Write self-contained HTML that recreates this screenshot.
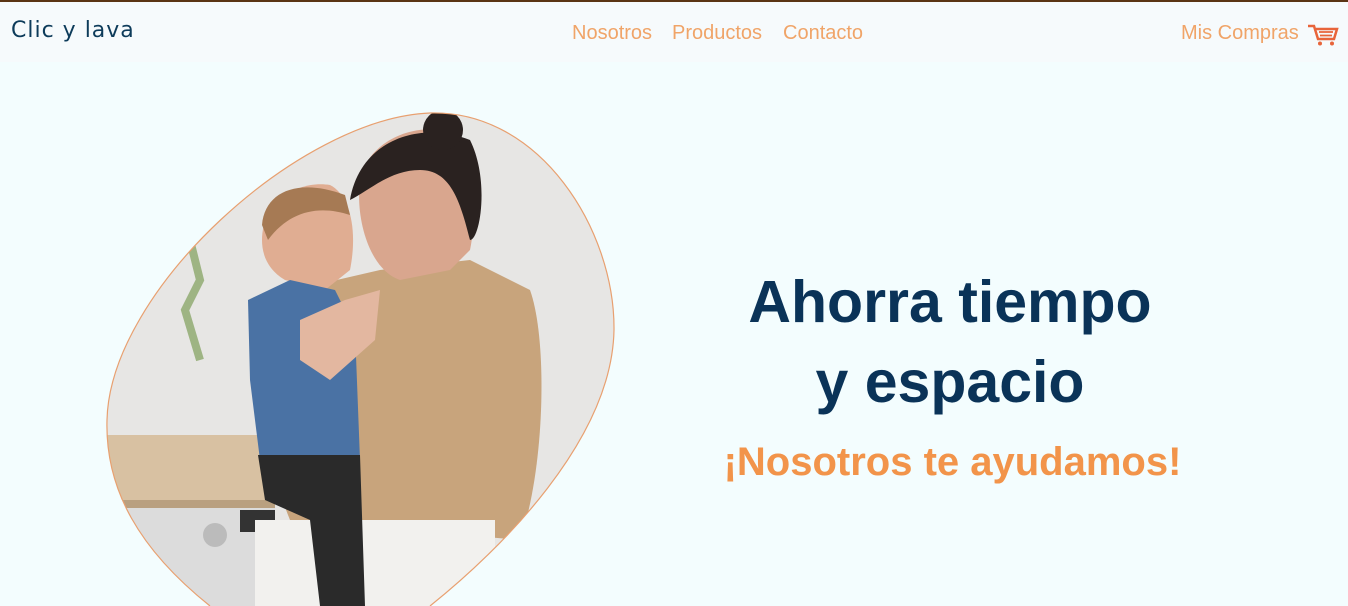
<!DOCTYPE html>
<html><head><meta charset="utf-8"><style>
*{margin:0;padding:0;box-sizing:border-box}
body{width:1348px;height:606px;overflow:hidden;background:#f3fdfe;font-family:"Liberation Sans",sans-serif;position:relative}
.top{position:absolute;left:0;top:0;width:1348px;height:2px;background:#5a3414}
nav{position:absolute;top:2px;left:0;width:1348px;height:60px;background:#f6fafc}
.logo{position:absolute;left:11px;top:16px;font-size:22px;color:#0d3b5a;letter-spacing:1px;font-family:"DejaVu Sans",sans-serif}
.l{position:absolute;top:20px;font-size:20px;color:#f0a468}
h1{position:absolute;left:700px;width:500px;text-align:center;top:262px;font-size:59px;line-height:80px;color:#0a3358;font-weight:700}
h2{position:absolute;left:700px;width:505px;text-align:center;top:440px;font-size:40px;color:#f2944a;font-weight:700}
</style></head><body>
<div class="top"></div>
<nav>
<div class="logo">Clic y lava</div>
<div class="l" style="left:572px">Nosotros</div>
<div class="l" style="left:672px">Productos</div>
<div class="l" style="left:783px">Contacto</div>
<div class="l" style="left:1181px">Mis Compras</div>
<svg style="position:absolute;left:1307px;top:21px" width="32" height="24" viewBox="0 0 32 24"><path d="M1 3h6l4 13h16l3-10H9" fill="none" stroke="#e8643a" stroke-width="2.5"/><path d="M12 9h14M13 12.5h12" stroke="#e8643a" stroke-width="1.8"/><circle cx="13" cy="20.5" r="2" fill="#e8643a"/><circle cx="25" cy="20.5" r="2" fill="#e8643a"/></svg>
</nav>
<svg style="position:absolute;left:0;top:0" width="700" height="606" viewBox="0 0 700 606">
<defs><clipPath id="c"><path d="M430 113C540 110 615 230 614 330C612 440 500 550 430 606L210 606C140 550 105 490 107 420C110 290 300 118 430 113Z"/></clipPath></defs>
<g clip-path="url(#c)">
<rect x="100" y="100" width="530" height="510" fill="#e7e6e4"/>
<rect x="100" y="435" width="175" height="72" fill="#d8c1a2"/>
<rect x="100" y="500" width="175" height="8" fill="#b9a080"/>
<rect x="110" y="508" width="165" height="100" fill="#dcdcdc"/>
<circle cx="215" cy="535" r="12" fill="#bbb"/>
<rect x="240" y="510" width="35" height="22" fill="#333"/>
<path d="M190 240L200 280L185 310L200 360" stroke="#7f9e5a" stroke-width="8" fill="none" opacity=".7"/>
<path d="M250 300C250 400 270 470 290 520L520 540C545 470 548 340 530 290L470 260L380 270Z" fill="#c8a47c"/>
<rect x="255" y="520" width="240" height="90" fill="#f2f1ee"/>
<path d="M360 180C365 150 400 125 440 130C470 140 480 200 470 250L450 270L400 280C370 270 355 220 360 180Z" fill="#d9a68e"/>
<path d="M350 200C360 140 420 120 470 140C490 180 480 240 470 240C460 200 450 170 420 170C390 170 370 190 350 200Z" fill="#2a2220"/>
<circle cx="443" cy="130" r="20" fill="#2a2220"/>
<path d="M262 240C262 200 300 180 330 185C350 195 358 230 350 270L325 290L285 280C268 270 262 255 262 240Z" fill="#e0ad92"/>
<path d="M262 225C265 190 300 178 345 195L350 215C320 205 290 210 268 240Z" fill="#a67a54"/>
<path d="M248 300L290 280L335 290L355 330L360 460L260 460L250 380Z" fill="#4a72a4"/>
<path d="M258 455L360 455L365 606L320 606L310 520L265 500Z" fill="#2a2a2a"/>
<path d="M300 320L345 300L380 290L375 340L330 380L300 360Z" fill="#e3b7a0"/>
</g>
<path d="M430 113C540 110 615 230 614 330C612 440 500 550 430 606M210 606C140 550 105 490 107 420C110 290 300 118 430 113" fill="none" stroke="#e8a070" stroke-width="1.2"/>
</svg>
<h1>Ahorra tiempo<br>y espacio</h1>
<h2>¡Nosotros te ayudamos!</h2>
</body></html>
